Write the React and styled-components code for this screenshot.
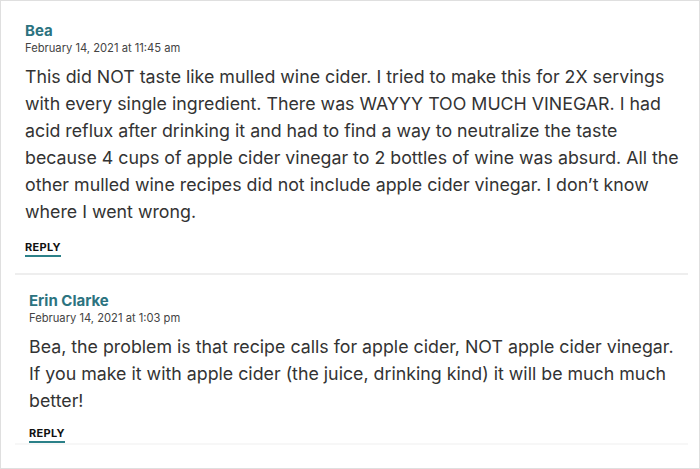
import React from 'react'
import styled, { createGlobalStyle } from 'styled-components'

const GlobalStyle = createGlobalStyle`
  html, body {
    margin: 0;
    padding: 0;
    background: #ffffff;
  }
  body {
    font-family: Inter, "Liberation Sans", sans-serif;
  }
`

const Frame = styled.div`
  box-sizing: border-box;
  width: 700px;
  height: 469px;
  border: 1px solid #dfdfdf;
  padding: 0 11px 0 14px;
  overflow: hidden;
`

const Comment = styled.article`
  padding: ${p => (p.$child ? '17px 0 0 14px' : '21px 0 16px 10px')};
  border-top: ${p => (p.$child ? '2px solid #eeeeee' : 'none')};
  border-bottom: ${p => (p.$child ? '2px solid #f7f7f7' : 'none')};
`

const Author = styled.div`
  font-weight: 700;
  font-size: 15px;
  line-height: 18px;
  color: #2c7380;
`

const Meta = styled.div`
  font-size: 11.2px;
  line-height: 17px;
  color: #444;
`

const Body = styled.p`
  margin: 6px 0 0;
  padding-right: 5px;
  font-size: 17.8px;
  line-height: 27px;
  color: #333;
`

const Reply = styled.a`
  display: inline-block;
  margin-top: ${p => (p.$child ? '12px' : '15px')};
  padding-bottom: 1px;
  font-size: 11px;
  font-weight: 700;
  letter-spacing: 0.3px;
  line-height: 14px;
  color: #111;
  text-decoration: none;
  border-bottom: 2px solid #2b8088;
`

const comments = [
  {
    author: 'Bea',
    date: 'February 14, 2021 at 11:45 am',
    text: 'This did NOT taste like mulled wine cider. I tried to make this for 2X servings with every single ingredient. There was WAYYY TOO MUCH VINEGAR. I had acid reflux after drinking it and had to find a way to neutralize the taste because 4 cups of apple cider vinegar to 2 bottles of wine was absurd. All the other mulled wine recipes did not include apple cider vinegar. I don\u2019t know where I went wrong.',
  },
  {
    author: 'Erin Clarke',
    date: 'February 14, 2021 at 1:03 pm',
    text: 'Bea, the problem is that recipe calls for apple cider, NOT apple cider vinegar. If you make it with apple cider (the juice, drinking kind) it will be much much better!',
    child: true,
  },
]

export default function App() {
  return (
    <>
      <GlobalStyle />
      <Frame>
        {comments.map(c => (
          <Comment key={c.author} $child={c.child}>
            <Author>{c.author}</Author>
            <Meta>{c.date}</Meta>
            <Body>{c.text}</Body>
            <Reply href="#" $child={c.child}>REPLY</Reply>
          </Comment>
        ))}
      </Frame>
    </>
  )
}
